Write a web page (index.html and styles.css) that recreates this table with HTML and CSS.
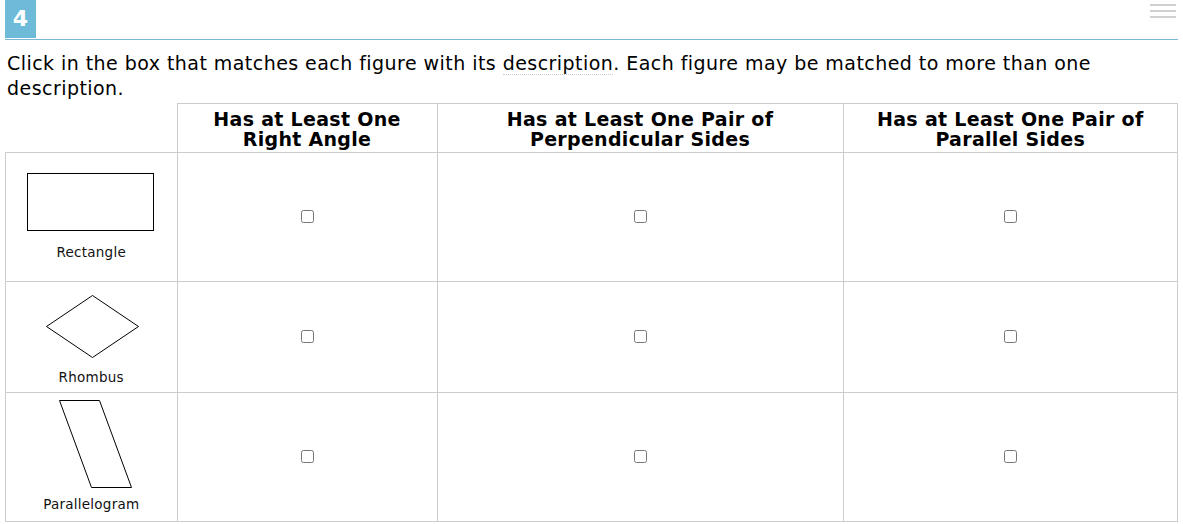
FILE: index.html
```html
<!DOCTYPE html>
<html>
<head>
<meta charset="utf-8">
<link rel="stylesheet" href="styles.css">
</head>
<body>
<div class="page">
  <div class="topbar">
    <div class="badge">4</div>
    <div class="menu"><span></span><span></span><span></span></div>
  </div>
  <p class="prompt">Click in the box that matches each figure with its <span class="term">description</span>. Each figure may be matched to more than one description.</p>
  <table class="grid">
    <thead>
      <tr class="head">
        <th class="corner"></th>
        <th class="c2">Has at Least One<br>Right Angle</th>
        <th class="c3">Has at Least One Pair of<br>Perpendicular Sides</th>
        <th class="c4">Has at Least One Pair of<br>Parallel Sides</th>
      </tr>
    </thead>
    <tbody>
      <tr class="r1">
        <td class="fig">
          <svg class="shape" width="130" height="62" viewBox="0 0 130 62"><rect x="1.5" y="1.5" width="126" height="57" fill="#fff" stroke="#000" stroke-width="1"/></svg>
          <div class="label l1">Rectangle</div>
        </td>
        <td><input type="checkbox"></td>
        <td><input type="checkbox"></td>
        <td><input type="checkbox"></td>
      </tr>
      <tr class="r2">
        <td class="fig">
          <svg class="shape" width="100" height="66" viewBox="0 0 100 66"><polygon points="3.5,32.5 49.5,1.5 95.5,32.5 49.5,63.5" fill="#fff" stroke="#000" stroke-width="1"/></svg>
          <div class="label l2">Rhombus</div>
        </td>
        <td><input type="checkbox"></td>
        <td><input type="checkbox"></td>
        <td><input type="checkbox"></td>
      </tr>
      <tr class="r3">
        <td class="fig">
          <svg class="shape" width="80" height="90" viewBox="0 0 80 90"><polygon points="5.5,1.5 45.5,1.5 77.5,88.5 37.5,88.5" fill="#fff" stroke="#000" stroke-width="1"/></svg>
          <div class="label l3">Parallelogram</div>
        </td>
        <td><input type="checkbox"></td>
        <td><input type="checkbox"></td>
        <td><input type="checkbox"></td>
      </tr>
    </tbody>
  </table>
</div>
</body>
</html>
```
FILE: styles.css
```css
html, body {
  margin: 0;
  padding: 0;
  background: #fff;
}
.page {
  padding: 0 5px 0 5px;
  font-family: "DejaVu Sans", Verdana, sans-serif;
  color: #000;
}
.topbar {
  display: flex;
  justify-content: space-between;
  align-items: flex-start;
  border-bottom: 1px solid #7ab8d4;
  height: 39px;
}
.badge {
  width: 31px;
  height: 38px;
  background: #6ebbd9;
  color: #fff;
  font-weight: bold;
  font-size: 22px;
  line-height: 38px;
  text-align: center;
}
.menu {
  display: flex;
  flex-direction: column;
  gap: 4px;
  margin-top: 4px;
  margin-right: 2px;
}
.menu span {
  display: block;
  width: 26px;
  height: 2px;
  background: #d0d0d0;
}
.prompt {
  margin: 11px 0 2px 2px;
  font-size: 19px;
  line-height: 25px;
  letter-spacing: 0.45px;
}
.term {
  border-bottom: 1px dotted #ccc;
}
.grid {
  border-collapse: collapse;
  width: 1173px;
  table-layout: fixed;
}
.grid th, .grid td {
  border: 1px solid #ccc;
  padding: 0;
  text-align: center;
  vertical-align: middle;
}
.grid th.corner {
  border-top: none;
  border-left: none;
  width: 171px;
}
.grid th.c2 { width: 259px; }
.grid th.c3 { width: 405px; }
.grid th.c4 { width: auto; }
.head th {
  height: 46px;
  font-size: 19px;
  line-height: 20px;
  letter-spacing: 0.3px;
  font-weight: bold;
  padding-top: 2px;
}
.r1 td { height: 128px; }
.r2 td { height: 110px; }
.r3 td { height: 128px; }
.fig {
  vertical-align: top !important;
}
.shape {
  display: block;
  margin: 0 auto;
}
.r1 .shape { margin-top: 19px; margin-left: 20px; }
.r2 .shape { margin-top: 12px; margin-left: 37px; }
.r3 .shape { margin-top: 6px; margin-left: 48px; }
.label {
  font-size: 13.5px;
  line-height: 16px;
  letter-spacing: 0.25px;
  color: #111;
}
.l1 { margin-top: 10px; }
.l2 { margin-top: 9px; }
.l3 { margin-top: 7px; }
input[type="checkbox"] {
  margin: 0;
  width: 13px;
  height: 13px;
}
```
